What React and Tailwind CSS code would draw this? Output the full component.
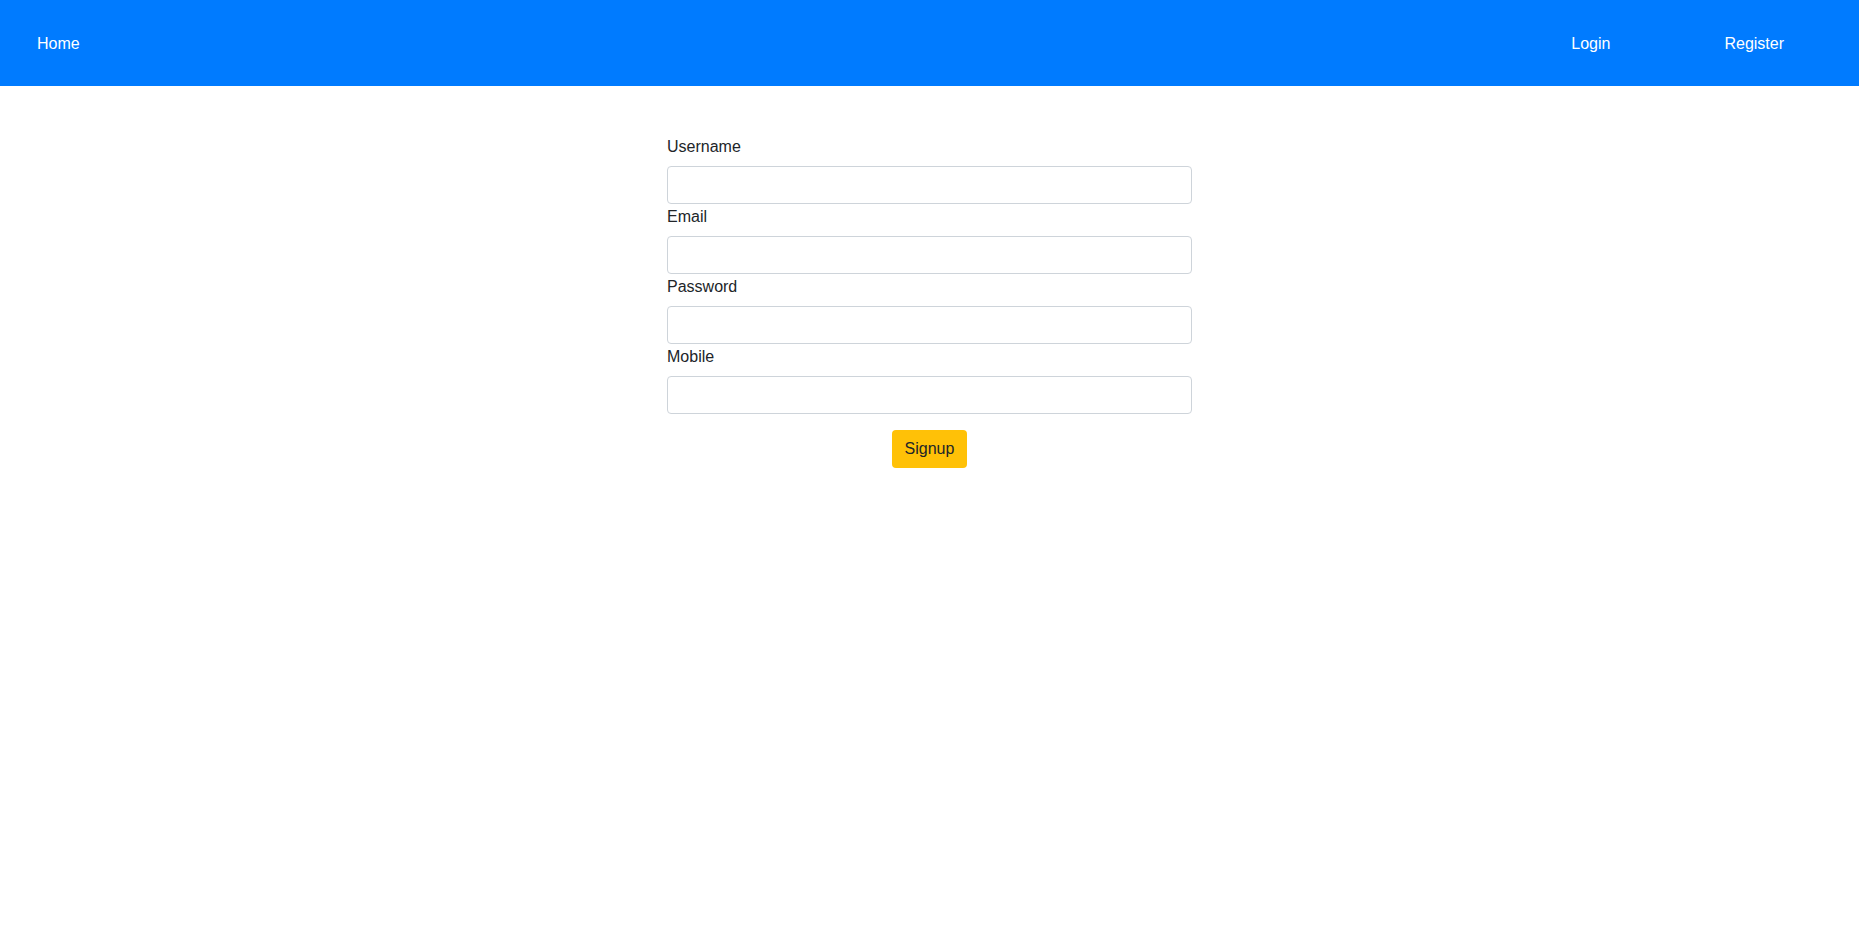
export default function App() {
  const fields = ['Username', 'Email', 'Password', 'Mobile'];

  return (
    <div className="min-h-screen bg-white text-[#212529] font-['Liberation_Sans',Arial,sans-serif] text-base">
      <nav className="h-[86px] bg-[#007bff] flex items-center justify-between pl-[37px] pr-[75px] pt-[2px] text-white">
        <a className="leading-6">Home</a>
        <div className="flex items-center gap-[114px]">
          <a className="leading-6">Login</a>
          <a className="leading-6">Register</a>
        </div>
      </nav>

      <form className="w-[525px] mx-auto mt-[48px] flex flex-col">
        {fields.map((f) => (
          <div key={f} className="flex flex-col">
            <label className="leading-6 pt-px mb-[7px]">{f}</label>
            <input
              type={f === 'Password' ? 'password' : 'text'}
              className="h-[38px] w-full px-3 border border-[#ced4da] rounded bg-white outline-none"
            />
          </div>
        ))}
        <div className="flex justify-center mt-4">
          <button
            type="button"
            className="h-[38px] px-3 border border-transparent bg-[#ffc107] text-[#212529] rounded leading-6"
          >
            Signup
          </button>
        </div>
      </form>
    </div>
  );
}
